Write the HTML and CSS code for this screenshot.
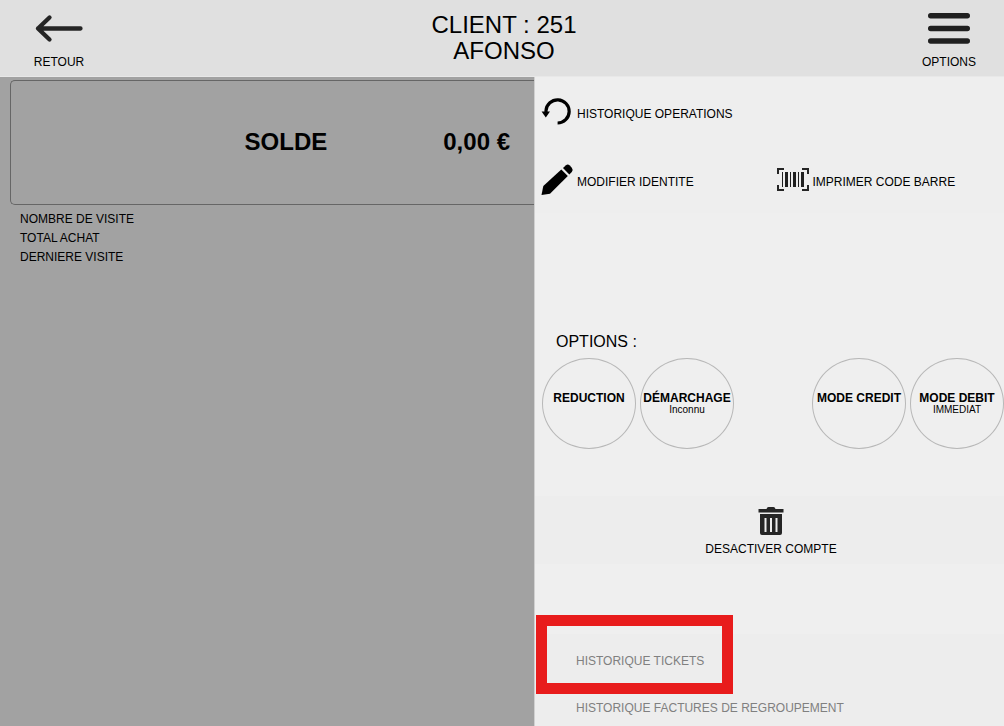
FILE: index.html
```
<!DOCTYPE html>
<html lang="fr">
<head>
<meta charset="UTF-8">
<meta name="viewport" content="width=device-width, initial-scale=1.0">
<title>Client : 251 AFONSO</title>
<link rel="stylesheet" href="styles.css">
</head>
<body>

    <header class="header">
        <button class="header-btn" type="button">
            <svg viewBox="0 0 48 34" width="48" height="34" aria-hidden="true">
                <path d="M14.500 8.500 3 19.500 14.500 30.500M3 19.500H45.500" fill="none" stroke="#252525" stroke-width="4.300" stroke-linecap="round" stroke-linejoin="round"/>
            </svg>
            <span>RETOUR</span>
        </button>
        <h1 class="title">CLIENT : 251<br>AFONSO</h1>
        <button class="header-btn" type="button">
            <svg viewBox="0 0 42 34" width="42" height="34" aria-hidden="true">
                <path d="M2.700 6.700H39.300M2.700 19.500H39.300M2.700 32H39.300" fill="none" stroke="#202020" stroke-width="5.400" stroke-linecap="round"/>
            </svg>
            <span>OPTIONS</span>
        </button>
    </header>

    <div class="content">
        <main class="account">
            <div class="balance">
                <span>SOLDE</span>
                <span>0,00 €</span>
            </div>
            <ul class="stats">
                <li>NOMBRE DE VISITE</li>
                <li>TOTAL ACHAT</li>
                <li>DERNIERE VISITE</li>
            </ul>
        </main>

        <aside class="panel">
            <div class="actions">
                <button class="action" type="button">
                    <svg viewBox="0 0 32 32" width="32" height="32" aria-hidden="true">
                        <path d="M5 16.500V14.600A11.600 11.600 0 1 1 16.600 27" fill="none" stroke="#000" stroke-width="3.200"/>
                        <path d="M.600 15.500H9L4.800 21.500z"/>
                    </svg>
                    <span>HISTORIQUE OPERATIONS</span>
                </button>
                <button class="action action-start" type="button">
                    <svg viewBox="0 0 32 32" width="32" height="32" aria-hidden="true">
                        <path d="M.500 31 2.300 22 20.300 5.400 26.800 12 9 29.800z"/>
                        <path d="M22 3.900 25 1.200Q26.800-.200 28.800 1.600L30.800 3.700Q32.500 5.800 30.800 7.900L28.300 10.500z"/>
                    </svg>
                    <span>MODIFIER IDENTITE</span>
                </button>
                <button class="action" type="button">
                    <svg viewBox="0 0 32 32" width="32" height="32" aria-hidden="true">
                        <path d="M1 10V5H7M25 5H31V10M31 21V26H25M7 26H1V21" fill="none" stroke="#252525" stroke-width="2"/>
                        <path d="M5 8h1v15H5zM8 8h3v15H8zM13 8h1v15h-1zM16 8h3v15h-3zM21 8h1v15h-1zM24 8h3v15h-3z" fill="#202020"/>
                    </svg>
                    <span>IMPRIMER CODE BARRE</span>
                </button>
            </div>

            <section class="options">
                <h2>OPTIONS :</h2>
                <div class="circles">
                    <div class="pair">
                        <button class="circle" type="button"><b>REDUCTION</b></button>
                        <button class="circle" type="button"><b>DÉMARCHAGE</b><small>Inconnu</small></button>
                    </div>
                    <div class="pair">
                        <button class="circle" type="button"><b>MODE CREDIT</b></button>
                        <button class="circle" type="button"><b>MODE DEBIT</b><small>IMMEDIAT</small></button>
                    </div>
                </div>
            </section>

            <button class="disable" type="button">
                <svg viewBox="0 0 26 28" width="26" height="28" aria-hidden="true">
                    <path d="M.500 2H8.500Q9 0 10.500 0H15.500Q17 0 17.500 2H25.500V5.500H.500z" fill="#252525"/>
                    <path d="M2 7H24V26Q24 28 22 28H4Q2 28 2 26zM6.500 11V25H8.500V11zM12 11V25H14V11zM17.500 11V25H19.500V11z" fill="#252525" fill-rule="evenodd"/>
                </svg>
                <span>DESACTIVER COMPTE</span>
            </button>

            <nav class="history">
                <a class="selected" href="#tickets">HISTORIQUE TICKETS</a>
                <a href="#factures">HISTORIQUE FACTURES DE REGROUPEMENT</a>
            </nav>
        </aside>
    </div>

</body>
</html>
```
FILE: styles.css
```
*,
*::before {
    box-sizing: border-box;
}
body {
    margin: 0;
    height: 100vh;
    display: flex;
    flex-direction: column;
    overflow: hidden;
    font-family: "Liberation Sans", Arial, sans-serif;
    font-size: 12px;
    line-height: 14px;
    color: #000;
}
button {
    margin: 0;
    padding: 0;
    border: none;
    background: none;
    font: inherit;
    color: inherit;
    cursor: pointer;
}
svg {
    display: block;
    flex: none;
    overflow: visible;
}
h1, h2 {
    margin: 0;
    font-weight: normal;
}

/* header */
.header {
    display: grid;
    grid-template-columns: 118px 1fr 110px;
    flex: none;
    background: #e0e0e0;
    border-bottom: 1px solid #e8e8e8;
}
.header-btn {
    display: flex;
    flex-direction: column;
    align-items: center;
    gap: 12px;
    padding: 9px 0 7px;
}
.title {
    padding: 12px 4px 0 0;
    font-size: 24px;
    line-height: 26px;
    text-align: center;
}

.content {
    flex: 1;
    display: flex;
    min-height: 0;
}

/* account */
.account {
    flex: 1;
    padding: 3px 0 0 10px;
    background: #a2a2a2;
}
.balance {
    display: flex;
    justify-content: flex-end;
    align-items: center;
    gap: 116px;
    height: 125px;
    padding: 0 24px 2px 0;
    border: 1px solid #666;
    border-right: none;
    border-radius: 5px 0 0 5px;
    font-size: 24px;
    line-height: 28px;
    font-weight: bold;
}
.stats {
    margin: 0;
    padding: 5px 10px;
    list-style: none;
    line-height: 19px;
}

/* side panel */
.panel {
    flex: 0 0 470px;
    background: #efefef;
    border-left: 1px solid #d0d0d0;
}
.actions {
    display: grid;
    grid-template-columns: 1fr 1fr;
    grid-auto-rows: 68px;
    column-gap: 8px;
    padding-left: 6px;
    background: #eee;
}
.action {
    display: flex;
    align-items: center;
    gap: 4px;
    padding-top: 2px;
}
.action span {
    padding-top: 4px;
}
.action-start {
    grid-column: 1;
}
.options {
    padding: 119px 0 47px 7px;
}
.options h2 {
    padding-left: 14px;
    font-size: 16px;
    line-height: 20px;
}
.circles {
    display: flex;
    justify-content: space-between;
    padding-top: 6px;
}
.pair {
    display: flex;
    gap: 4px;
}
.circle {
    display: flex;
    flex-direction: column;
    align-items: center;
    width: 94px;
    height: 91px;
    padding-top: 32px;
    border: 1px solid #b8b8b8;
    border-radius: 50%;
    white-space: nowrap;
}
.circle small {
    font-size: 10px;
    line-height: 10px;
}
.disable {
    display: flex;
    flex-direction: column;
    align-items: center;
    gap: 7px;
    width: 100%;
    padding: 11px 0 8px 3px;
    background: #ededed;
}
.history {
    margin-top: 70px;
    padding-top: 4px;
    background: #ededed;
}
.history a {
    display: block;
    position: relative;
    padding-left: 41px;
    line-height: 47px;
    color: #808080;
    text-decoration: none;
}
/* red frame drawn over the selected entry */
.history .selected::before {
    content: "";
    position: absolute;
    top: -23px;
    left: 1px;
    width: 197px;
    height: 79px;
    border: 11px solid #e81c1c;
}
```
